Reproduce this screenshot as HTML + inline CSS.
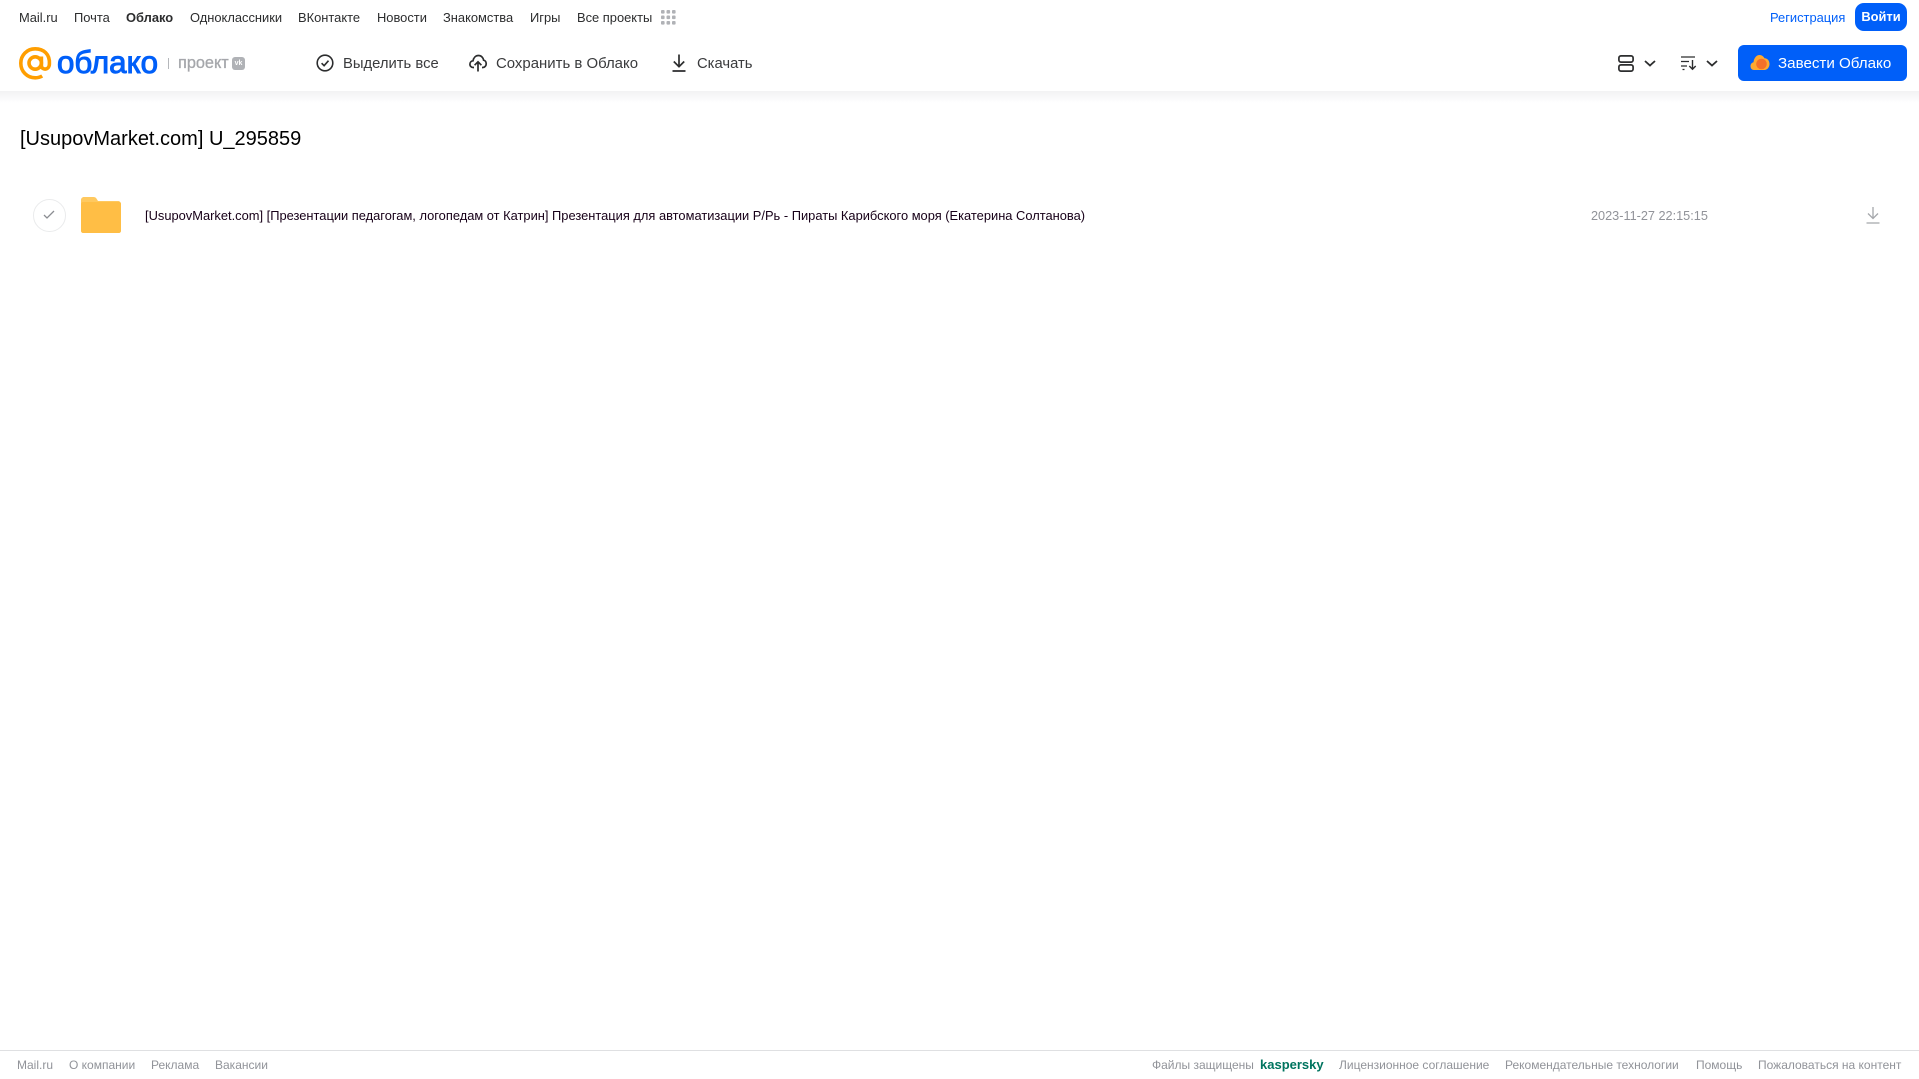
<!DOCTYPE html>
<html lang="ru"><head><meta charset="utf-8"><title>Облако</title>
<style>
html,body{margin:0;padding:0;background:#fff;width:1919px;height:1079px;overflow:hidden;font-family:"Liberation Sans",Arial,sans-serif}
.a{position:absolute;white-space:nowrap}
.n{top:8.5px;font-size:12.9px;line-height:17px;color:#2c2d2e}
.t{top:53.5px;font-size:14.8px;line-height:20px;color:#3a3b3d}
.f{top:1057px;font-size:12px;line-height:16px;color:#919399}
svg{position:absolute;overflow:visible}
</style></head><body>
<div class="a" style="left:0;top:91px;width:1919px;height:12px;background:linear-gradient(#f2f2f3,#fff)"></div>

<div class="a n" style="left:19px">Mail.ru</div>
<div class="a n" style="left:74px">Почта</div>
<div class="a n" style="left:126px;font-weight:bold">Облако</div>
<div class="a n" style="left:190px">Одноклассники</div>
<div class="a n" style="left:298px">ВКонтакте</div>
<div class="a n" style="left:377px">Новости</div>
<div class="a n" style="left:443px">Знакомства</div>
<div class="a n" style="left:530px">Игры</div>
<div class="a n" style="left:577px">Все проекты</div>
<svg style="left:661px;top:10px" width="15" height="15" fill="#b0b2b6"><rect x="0" y="0" width="3.6" height="3.6" rx="1"/><rect x="5.5" y="0" width="3.6" height="3.6" rx="1"/><rect x="11" y="0" width="3.6" height="3.6" rx="1"/><rect x="0" y="5.5" width="3.6" height="3.6" rx="1"/><rect x="5.5" y="5.5" width="3.6" height="3.6" rx="1"/><rect x="11" y="5.5" width="3.6" height="3.6" rx="1"/><rect x="0" y="11" width="3.6" height="3.6" rx="1"/><rect x="5.5" y="11" width="3.6" height="3.6" rx="1"/><rect x="11" y="11" width="3.6" height="3.6" rx="1"/></svg>

<svg style="left:19px;top:47px" width="33" height="33" fill="none" stroke="#ff9e00" stroke-width="3.6"><circle cx="16.2" cy="16" r="6.2"/><path d="M22.4 9.5v9c0 5 7.8 5 8-1.5C31 7 24.500 1.800 16.200 1.800 8 1.800 1.800 8.200 1.800 16.200 1.800 24.500 8.200 30.800 16.200 30.800c2.800 0 5-.6 7-1.800"/></svg>
<div class="a" style="left:57px;top:43px;font-size:31.300px;line-height:40px;color:#005ff9;-webkit-text-stroke:1px #005ff9">облако</div>
<div class="a" style="left:168px;top:58px;width:1px;height:11px;background:#b5b7bb"></div>
<div class="a" style="left:178px;top:53px;font-size:16.300px;line-height:20px;color:#a5a7ab;-webkit-text-stroke:.3px #a5a7ab">проект</div>
<div class="a" style="left:232px;top:57px;width:13px;height:13px;background:#b0b2b6;border-radius:3px;color:#fff;font-size:7px;font-weight:bold;line-height:13px;text-align:center">vk</div>

<svg style="left:316px;top:54px" width="18" height="18" fill="none" stroke="#2c2d2e" stroke-width="1.6"><circle cx="9" cy="9" r="7.800"/><path d="M5.600 9.200l2.500 2.500 4.400-5"/></svg>
<div class="a t" style="left:343px">Выделить все</div>
<svg style="left:469px;top:54px" width="18" height="18" fill="none" stroke="#2c2d2e" stroke-width="1.700"><path d="M5 13.500H4.200C2 13.500 .9 11.800 .9 10.200c0-1.800 1.300-3.200 3.100-3.400C4.600 3.600 6.700 1.500 9.500 1.500c2.700 0 4.700 2 5.100 4.700 1.600.3 2.600 1.800 2.600 3.500 0 1.900-1.300 3.800-3.400 3.800H13"/><path d="M9 17.500V8M5.600 11.200L9 7.800l3.400 3.400"/></svg>
<div class="a t" style="left:496px;font-size:14.950px">Сохранить в Облако</div>
<svg style="left:672px;top:54px" width="14" height="18" fill="none" stroke="#2c2d2e" stroke-width="1.700"><path d="M7 .5v12M1.800 7.500L7 12.700l5.200-5.200M.5 17h13"/></svg>
<div class="a t" style="left:697px">Скачать</div>

<svg style="left:1618px;top:55px" width="16" height="17" fill="none" stroke="#2c2d2e" stroke-width="1.700"><rect x=".9" y=".9" width="14.200" height="6.200" rx="2"/><rect x=".9" y="9.900" width="14.200" height="6.200" rx="2"/></svg>
<svg style="left:1644px;top:60px" width="12" height="7" fill="none" stroke="#2c2d2e" stroke-width="1.800"><path d="M1 1l5 4.500L11 1"/></svg>
<svg style="left:1681px;top:56px" width="16" height="14" fill="none" stroke="#2c2d2e" stroke-width="1.200"><path d="M0 1h14M0 5.500h8M0 10h6M1.500 13.500h2"/><path stroke-width="1.400" d="M11.500 4v9M8.300 10l3.200 3.200 3.200-3.200"/></svg>
<svg style="left:1706px;top:60px" width="12" height="7" fill="none" stroke="#2c2d2e" stroke-width="1.800"><path d="M1 1l5 4.500L11 1"/></svg>

<div class="a n" style="left:1770px;color:#005ff9">Регистрация</div>
<div class="a" style="left:1855px;top:3px;width:52px;height:28px;border-radius:9px;background:#005ff9;color:#fff;font-size:12.900px;font-weight:bold;line-height:28px;text-align:center">Войти</div>
<div class="a" style="left:1738px;top:45px;width:169px;height:36px;border-radius:6px;background:#005ff9"></div>
<svg style="left:1750px;top:54px" width="20" height="18"><path fill="#ffa930" d="M4 16C1.500 16 .5 14 .5 12 .5 10 2 8.500 3.500 8.200 4 4 6.500 1 9.500 1c2.500 0 4 1.500 5 3.200 3 0 5 2.500 5 5.800 0 3.500-2.500 6-5 6z"/><circle cx="11.500" cy="10" r="5.300" fill="#f4702a"/></svg>
<div class="a t" style="left:1778px;color:#fff;font-size:15.150px">Завести Облако</div>

<div class="a" style="left:20px;top:125px;font-size:20px;line-height:28px;color:#000">[UsupovMarket.com] U_295859</div>

<div class="a" style="left:33px;top:199px;width:31px;height:31px;border:1px solid #eaebec;border-radius:50%"></div>
<svg style="left:43px;top:210px" width="12" height="10" fill="none" stroke="#8b8d92" stroke-width="1.300"><path d="M1 5l3 3 7-7"/></svg>
<svg style="left:81px;top:197px" width="40" height="36"><path fill="#ffc95f" d="M0 3c0-1.700 1.300-3 3-3h9.500c1.300 0 2.300.6 3 1.600L17 4h20c1.700 0 3 1.300 3 3v5H0z"/><path fill="#ffbe45" d="M2 5h36c1.100 0 2 .9 2 2v27c0 1.100-.9 2-2 2H2c-1.100 0-2-.9-2-2V7c0-1.100.9-2 2-2z"/></svg>
<div class="a" style="left:145px;top:207px;font-size:12.880px;line-height:17px;color:#170018">[UsupovMarket.com] [Презентации педагогам, логопедам от Катрин] Презентация для автоматизации Р/Рь - Пираты Карибского моря (Екатерина Солтанова)</div>
<div class="a" style="left:1591px;top:207.500px;font-size:12.700px;line-height:17px;color:#919399">2023-11-27 22:15:15</div>
<svg style="left:1866px;top:206px" width="14" height="18" fill="none" stroke="#a5a7ab" stroke-width="1.300"><path d="M7 1v11M2 7.500L7 12.500l5-5M.5 17h13"/></svg>

<div class="a" style="left:0;top:1050px;width:1919px;height:1px;background:#dfe0e2"></div>
<div class="a f" style="left:17px">Mail.ru</div>
<div class="a f" style="left:69px">О компании</div>
<div class="a f" style="left:151px">Реклама</div>
<div class="a f" style="left:215px">Вакансии</div>
<div class="a f" style="left:1152px">Файлы защищены</div>
<div class="a f" style="left:1260px;color:#00745f;font-weight:bold;font-size:13px">kaspersky</div>
<div class="a f" style="left:1339px">Лицензионное соглашение</div>
<div class="a f" style="left:1505px">Рекомендательные технологии</div>
<div class="a f" style="left:1696px">Помощь</div>
<div class="a f" style="left:1758px">Пожаловаться на контент</div>
</body></html>
